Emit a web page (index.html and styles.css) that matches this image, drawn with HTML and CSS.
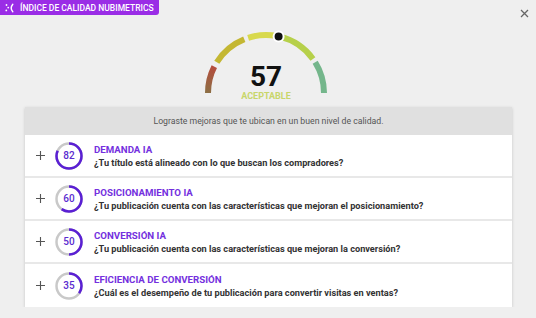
FILE: index.html
```html
<!DOCTYPE html>
<html lang="es">
<head>
    <meta charset="UTF-8">
    <meta name="viewport" content="width=device-width, initial-scale=1.0">
    <title>Índice de calidad Nubimetrics</title>
    <link rel="stylesheet" href="styles.css">
</head>
<body>
    <div class="topbar">
        <div class="badge">
            <svg class="badge-icon" width="9" height="10" viewBox="0 0 9 10">
                <circle cx="1.5" cy="2" r="0.9" fill="#fff"/>
                <circle cx="3.2" cy="4.6" r="0.9" fill="#fff"/>
                <circle cx="1.3" cy="7.4" r="0.9" fill="#fff"/>
                <path d="M7.8 1.2 Q4.6 5 7.8 8.8" fill="none" stroke="#fff" stroke-width="1.4" stroke-linecap="round"/>
            </svg>
            <span>ÍNDICE DE CALIDAD NUBIMETRICS</span>
        </div>
        <button class="close" type="button" aria-label="Cerrar">
            <svg width="9" height="9" viewBox="0 0 9 9">
                <path d="M1 1 L8 8 M8 1 L1 8" stroke="#666" stroke-width="1.3"/>
            </svg>
        </button>
    </div>

    <div class="gauge">
        <svg width="136" height="72" viewBox="0 0 136 72">
            <defs>
                <linearGradient id="low" gradientUnits="userSpaceOnUse" x1="10" y1="66" x2="18" y2="38">
                    <stop offset="0" stop-color="#8c6f45"/>
                    <stop offset="1" stop-color="#b94a3c"/>
                </linearGradient>
            </defs>
            <g fill="none" stroke-width="6">
                <path d="M10 66 A58 58 0 0 1 126 66" pathLength="180" stroke="url(#low)" stroke-dasharray="27 400" stroke-dashoffset="0"/>
                <path d="M10 66 A58 58 0 0 1 126 66" pathLength="180" stroke="#c4b733" stroke-dasharray="36 400" stroke-dashoffset="-32"/>
                <path d="M10 66 A58 58 0 0 1 126 66" pathLength="180" stroke="#d8d94d" stroke-dasharray="29 400" stroke-dashoffset="-72"/>
                <path d="M10 66 A58 58 0 0 1 126 66" pathLength="180" stroke="#b6d04a" stroke-dasharray="40 400" stroke-dashoffset="-104"/>
                <path d="M10 66 A58 58 0 0 1 126 66" pathLength="180" stroke="#74b68b" stroke-dasharray="32 400" stroke-dashoffset="-148"/>
            </g>
            <circle cx="80.6" cy="9.4" r="5" fill="#111" stroke="#fff" stroke-width="2"/>
        </svg>
        <div class="gauge-value">
            <div class="gauge-number">57</div>
            <div class="gauge-label">ACEPTABLE</div>
        </div>
    </div>

    <div class="panel">
        <div class="panel-header">Lograste mejoras que te ubican en un buen nivel de calidad.</div>

        <div class="row">
            <svg class="plus" width="9" height="9" viewBox="0 0 9 9"><path d="M4.5 0 V9 M0 4.5 H9" stroke="#555" stroke-width="1.1"/></svg>
            <div class="ring">
                <svg width="28" height="28" viewBox="0 0 28 28">
                    <circle cx="14" cy="14" r="12.5" fill="none" stroke="#c9c9c9" stroke-width="2.5"/>
                    <circle cx="14" cy="14" r="12.5" fill="none" stroke="#5a1fd4" stroke-width="2.5" pathLength="100" stroke-dasharray="82 100" transform="rotate(-90 14 14)"/>
                </svg>
                <span>82</span>
            </div>
            <div class="row-text">
                <div class="row-title">DEMANDA IA</div>
                <div class="row-question">¿Tu título está alineado con lo que buscan los compradores?</div>
            </div>
        </div>

        <div class="row">
            <svg class="plus" width="9" height="9" viewBox="0 0 9 9"><path d="M4.5 0 V9 M0 4.5 H9" stroke="#555" stroke-width="1.1"/></svg>
            <div class="ring">
                <svg width="28" height="28" viewBox="0 0 28 28">
                    <circle cx="14" cy="14" r="12.5" fill="none" stroke="#c9c9c9" stroke-width="2.5"/>
                    <circle cx="14" cy="14" r="12.5" fill="none" stroke="#5a1fd4" stroke-width="2.5" pathLength="100" stroke-dasharray="60 100" transform="rotate(-90 14 14)"/>
                </svg>
                <span>60</span>
            </div>
            <div class="row-text">
                <div class="row-title">POSICIONAMIENTO IA</div>
                <div class="row-question">¿Tu publicación cuenta con las características que mejoran el posicionamiento?</div>
            </div>
        </div>

        <div class="row">
            <svg class="plus" width="9" height="9" viewBox="0 0 9 9"><path d="M4.5 0 V9 M0 4.5 H9" stroke="#555" stroke-width="1.1"/></svg>
            <div class="ring">
                <svg width="28" height="28" viewBox="0 0 28 28">
                    <circle cx="14" cy="14" r="12.5" fill="none" stroke="#c9c9c9" stroke-width="2.5"/>
                    <circle cx="14" cy="14" r="12.5" fill="none" stroke="#5a1fd4" stroke-width="2.5" pathLength="100" stroke-dasharray="50 100" transform="rotate(-90 14 14)"/>
                </svg>
                <span>50</span>
            </div>
            <div class="row-text">
                <div class="row-title">CONVERSIÓN IA</div>
                <div class="row-question">¿Tu publicación cuenta con las características que mejoran la conversión?</div>
            </div>
        </div>

        <div class="row">
            <svg class="plus" width="9" height="9" viewBox="0 0 9 9"><path d="M4.5 0 V9 M0 4.5 H9" stroke="#555" stroke-width="1.1"/></svg>
            <div class="ring">
                <svg width="28" height="28" viewBox="0 0 28 28">
                    <circle cx="14" cy="14" r="12.5" fill="none" stroke="#c9c9c9" stroke-width="2.5"/>
                    <circle cx="14" cy="14" r="12.5" fill="none" stroke="#5a1fd4" stroke-width="2.5" pathLength="100" stroke-dasharray="35 100" transform="rotate(-90 14 14)"/>
                </svg>
                <span>35</span>
            </div>
            <div class="row-text">
                <div class="row-title">EFICIENCIA DE CONVERSIÓN</div>
                <div class="row-question">¿Cuál es el desempeño de tu publicación para convertir visitas en ventas?</div>
            </div>
        </div>
    </div>
</body>
</html>
```

FILE: styles.css
```css
body {
    font-family: Roboto, "Liberation Sans", sans-serif;
    background-color: #efefef;
    margin: 0;
    padding: 0;
    color: #333;
}
.topbar {
    display: flex;
    justify-content: space-between;
    align-items: flex-start;
    height: 27px;
}
.badge {
    display: flex;
    align-items: center;
    gap: 6px;
    height: 15px;
    width: 159px;
    box-sizing: border-box;
    padding-left: 5px;
    background-color: #9a2de6;
    color: white;
    font-size: 8.5px;
    font-weight: 500;
    border-bottom-right-radius: 3px;
    white-space: nowrap;
}
.badge-icon {
    flex-shrink: 0;
}
.close {
    margin: 9px 7px 0 0;
    padding: 0;
    width: 9px;
    height: 9px;
    border: none;
    background: none;
    cursor: pointer;
    display: flex;
}
.gauge {
    display: grid;
    width: 136px;
    height: 72px;
    margin-left: 198px;
    margin-bottom: 8px;
}
.gauge > * {
    grid-area: 1 / 1;
}
.gauge-value {
    padding-top: 38px;
    text-align: center;
}
.gauge-number {
    font-size: 28px;
    line-height: 24px;
    font-weight: 700;
    color: #111;
}
.gauge-label {
    margin-top: 2px;
    font-size: 9px;
    line-height: 10px;
    font-weight: 700;
    color: #c8d66a;
}
.panel {
    margin-left: 25px;
    width: 487px;
    background: #e8e8e8;
    box-shadow: 0 1px 3px rgba(0, 0, 0, 0.18);
}
.panel-header {
    height: 28px;
    line-height: 28px;
    background-color: #e0e0e0;
    text-align: center;
    font-size: 8.7px;
    color: #555;
}
.row {
    display: flex;
    align-items: center;
    height: 41px;
    background: white;
    margin-bottom: 2px;
    padding-left: 11px;
}
.row:last-child {
    margin-bottom: 0;
    height: 43px;
}
.plus {
    flex-shrink: 0;
    margin-right: 10px;
}
.ring {
    display: grid;
    width: 28px;
    height: 28px;
    margin-right: 11px;
    flex-shrink: 0;
}
.ring > * {
    grid-area: 1 / 1;
}
.ring span {
    align-self: center;
    justify-self: center;
    font-size: 10px;
    font-weight: 500;
    color: #5a2bcf;
}
.row-title {
    font-size: 9.7px;
    line-height: 13px;
    font-weight: 700;
    color: #7430de;
}
.row-question {
    font-size: 9.2px;
    line-height: 13px;
    font-weight: 700;
    color: #333;
}
```
